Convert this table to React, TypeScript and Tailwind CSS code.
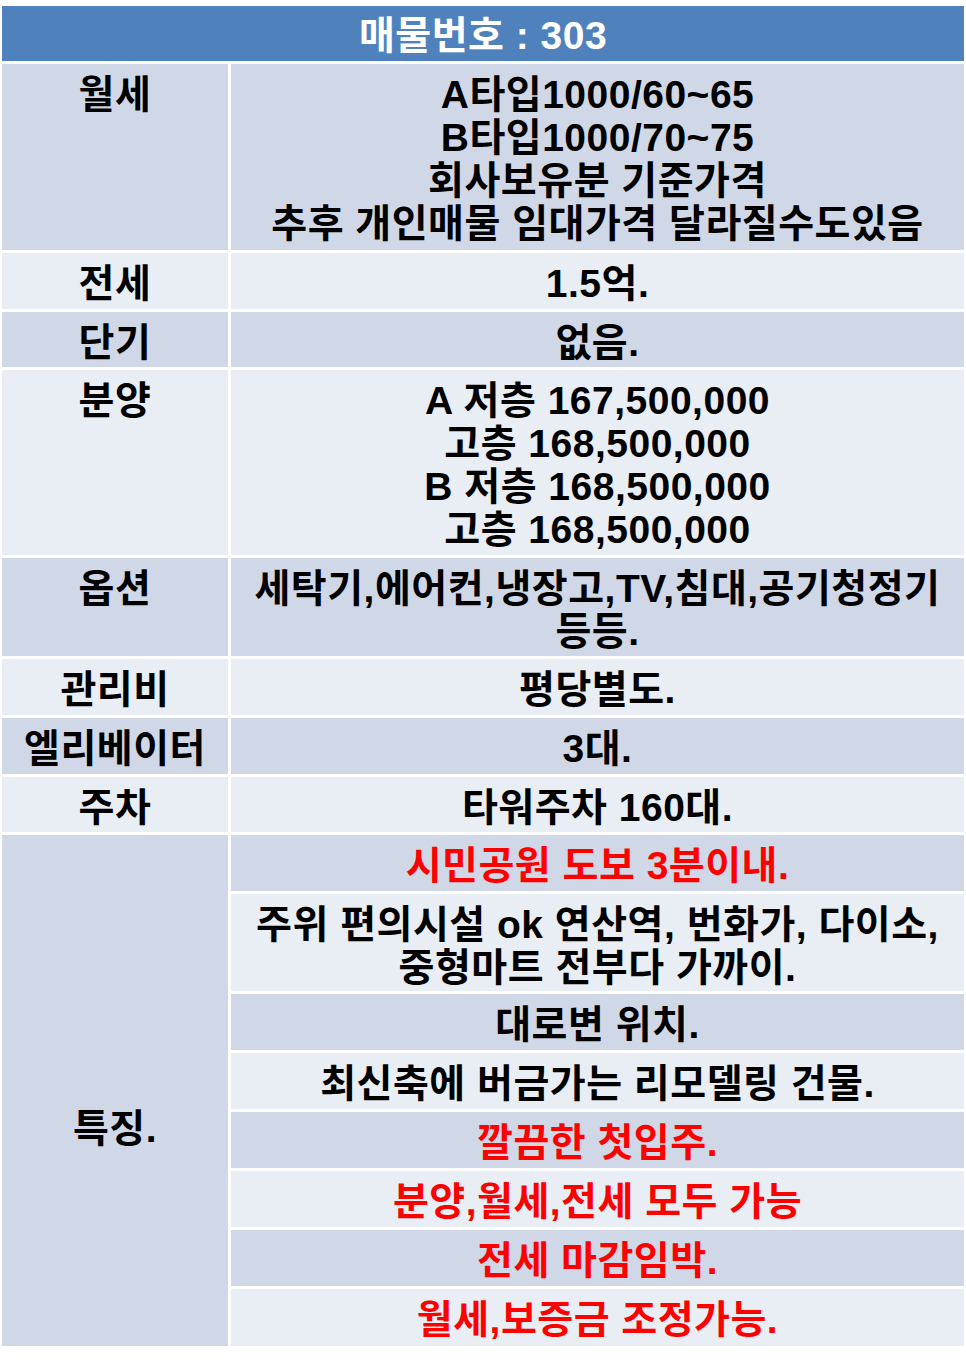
const rows = [
  {
    label: "월세",
    lines: [
      "A타입1000/60~65",
      "B타입1000/70~75",
      "회사보유분 기준가격",
      "추후 개인매물 임대가격 달라질수도있음",
    ],
    h: "h-[186px]",
    dark: true,
  },
  { label: "전세", lines: ["1.5억."], h: "h-[56px]", dark: false },
  { label: "단기", lines: ["없음."], h: "h-[55px]", dark: true },
  {
    label: "분양",
    lines: [
      "A 저층 167,500,000",
      "고층 168,500,000",
      "B 저층 168,500,000",
      "고층 168,500,000",
    ],
    h: "h-[185px]",
    dark: false,
  },
  {
    label: "옵션",
    lines: ["세탁기,에어컨,냉장고,TV,침대,공기청정기", "등등."],
    h: "h-[98px]",
    dark: true,
  },
  { label: "관리비", lines: ["평당별도."], h: "h-[56px]", dark: false },
  { label: "엘리베이터", lines: ["3대."], h: "h-[56px]", dark: true },
  { label: "주차", lines: ["타워주차 160대."], h: "h-[55px]", dark: false },
];

const features = [
  { lines: ["시민공원 도보 3분이내."], red: true, h: "h-[56px]" },
  {
    lines: ["주위 편의시설 ok 연산역, 번화가, 다이소,", "중형마트 전부다 가까이."],
    red: false,
    h: "h-[97px]",
  },
  { lines: ["대로변 위치."], red: false, h: "h-[56px]" },
  { lines: ["최신축에 버금가는 리모델링 건물."], red: false, h: "h-[56px]" },
  { lines: ["깔끔한 첫입주."], red: true, h: "h-[56px]" },
  { lines: ["분양,월세,전세 모두 가능"], red: true, h: "h-[56px]" },
  { lines: ["전세 마감임박."], red: true, h: "h-[56px]" },
  { lines: ["월세,보증금 조정가능."], red: true, h: "h-[57px]" },
];

const font = {
  fontFamily: '"Liberation Sans", "Noto Sans CJK KR", sans-serif',
};

export default function App() {
  return (
    <div className="w-[966px] h-[1361px] bg-white pt-[6px] pl-[2px]" style={font}>
      <div className="w-[962px] flex flex-col gap-[3px] font-bold text-[39px] leading-[43px] tracking-[0.5px] text-black">
        {/* title */}
        <div className="h-[55px] bg-[#4f81bd] flex items-center justify-center pt-[4px] text-white">
          매물번호 : 303
        </div>

        {rows.map((row) => (
          <div key={row.label} className={`grid grid-cols-[226px_1fr] gap-[3px] ${row.h}`}>
            <div className={`${row.dark ? "bg-[#d0d8e8]" : "bg-[#e9edf4]"} text-center pt-[9px] whitespace-nowrap`}>
              {row.label}
            </div>
            <div className={`${row.dark ? "bg-[#d0d8e8]" : "bg-[#e9edf4]"} text-center pt-[9px] whitespace-nowrap`}>
              {row.lines.map((l, i) => (
                <div key={i}>{l}</div>
              ))}
            </div>
          </div>
        ))}

        {/* 특징 */}
        <div className="grid grid-cols-[226px_1fr] gap-[3px]">
          <div className="bg-[#d0d8e8] flex items-center justify-center pt-[76px]">특징.</div>
          <div className="flex flex-col gap-[3px]">
            {features.map((f, i) => (
              <div
                key={i}
                className={`${f.h} ${i % 2 === 0 ? "bg-[#d0d8e8]" : "bg-[#e9edf4]"} ${f.red ? "text-[#ff0000]" : ""} text-center pt-[9px] whitespace-nowrap`}
              >
                {f.lines.map((l, j) => (
                  <div key={j}>{l}</div>
                ))}
              </div>
            ))}
          </div>
        </div>
      </div>
    </div>
  );
}
